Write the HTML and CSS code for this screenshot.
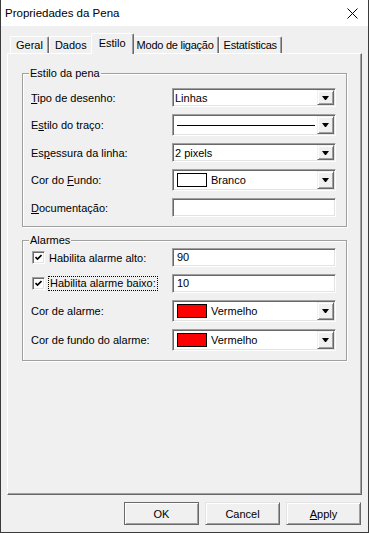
FILE: index.html
```html
<!DOCTYPE html>
<html lang="pt">
<head>
    <meta charset="UTF-8">
    <meta name="viewport" content="width=device-width, initial-scale=1.0">
    <title>Propriedades da Pena</title>
    <link rel="stylesheet" href="styles.css">
</head>
<body>

<div class="window">
    <!-- Barra de título -->
    <div class="titlebar">
        <span class="title">Propriedades da Pena</span>
        <svg class="close" width="11" height="11" viewBox="0 0 11 11">
            <path d="M0.5 0.5 L10.5 10.5 M10.5 0.5 L0.5 10.5" stroke="#000" stroke-width="1" fill="none"/>
        </svg>
    </div>

    <div class="client">
        <!-- Abas -->
        <div class="tabs">
            <div class="tab">Geral</div>
            <div class="tab">Dados</div>
            <div class="tab selected">Estilo</div>
            <div class="tab narrow">Modo de ligação</div>
            <div class="tab narrow">Estatísticas</div>
        </div>

        <div class="panel">
            <fieldset class="group">
                <legend>Estilo da pena</legend>
                <div class="rows pen-rows">
                    <label><u>T</u>ipo de desenho:</label>
                    <div class="combo">
                        <span class="value">Linhas</span>
                        <span class="drop"></span>
                    </div>

                    <label>E<u>s</u>tilo do traço:</label>
                    <div class="combo tall">
                        <span class="value"><span class="line"></span></span>
                        <span class="drop"></span>
                    </div>

                    <label>Es<u>p</u>essura da linha:</label>
                    <div class="combo">
                        <span class="value">2 pixels</span>
                        <span class="drop"></span>
                    </div>

                    <label>Cor do <u>F</u>undo:</label>
                    <div class="combo tall">
                        <span class="value"><span class="swatch white"></span>Branco</span>
                        <span class="drop"></span>
                    </div>

                    <label><u>D</u>ocumentação:</label>
                    <div class="field"></div>
                </div>
            </fieldset>

            <fieldset class="group alarms">
                <legend>Alarmes</legend>
                <div class="rows alarm-rows">
                    <label class="check-label"><span class="check"><svg width="7" height="7" viewBox="0 0 7 7"><path d="M0.5 3 L2.5 5 L6.5 1" stroke="#000" stroke-width="1.6" fill="none"/></svg></span>Habilita alarme alto:</label>
                    <div class="field">90</div>

                    <label class="check-label"><span class="check"><svg width="7" height="7" viewBox="0 0 7 7"><path d="M0.5 3 L2.5 5 L6.5 1" stroke="#000" stroke-width="1.6" fill="none"/></svg></span><span class="focus">Habilita alarme baixo:</span></label>
                    <div class="field">10</div>

                    <label>Cor de alarme:</label>
                    <div class="combo tall">
                        <span class="value"><span class="swatch red"></span>Vermelho</span>
                        <span class="drop"></span>
                    </div>

                    <label>Cor de fundo do alarme:</label>
                    <div class="combo tall">
                        <span class="value"><span class="swatch red"></span>Vermelho</span>
                        <span class="drop"></span>
                    </div>
                </div>
            </fieldset>
        </div>

        <!-- Botões do diálogo -->
        <div class="buttons">
            <button class="btn default">OK</button>
            <button class="btn">Cancel</button>
            <button class="btn"><u>A</u>pply</button>
        </div>
    </div>
</div>

</body>
</html>
```

FILE: styles.css
```css
/* Diálogo no estilo clássico do Windows */
* {
    box-sizing: border-box;
}

body {
    margin: 0;
    font-family: "Liberation Sans", Arial, sans-serif;
    font-size: 11px;
    color: #000;
    background-color: #f0f0f0;
}

.window {
    width: 369px;
    height: 533px;
    border: 1px solid #3b3b3b;
    border-top: none;
    background-color: #f0f0f0;
    display: flex;
    flex-direction: column;
}

.titlebar {
    height: 26px;
    background-color: #fff;
    display: flex;
    align-items: center;
    justify-content: space-between;
    padding: 0 10px 0 4px;
}

.title {
    font-size: 11.5px;
}

.close {
    display: block;
}

.client {
    flex: 1;
    padding: 7px 6px 7px 6px;
    display: flex;
    flex-direction: column;
}

/* Abas */
.tabs {
    display: flex;
    align-items: flex-end;
    height: 21px;
    padding-left: 3px;
    margin-bottom: -1px;
    position: relative;
    z-index: 1;
}

.tab {
    height: 17px;
    margin-bottom: 1px;
    padding: 1px 5px 0;
    line-height: 14px;
    white-space: nowrap;
    background-color: #f0f0f0;
    border: 1px solid;
    border-color: #fff #696969 transparent #fff;
    border-bottom: none;
    border-radius: 2px 2px 0 0;
    box-shadow: inset -1px 0 0 #a0a0a0;
}

.tab.narrow {
    padding: 1px 4px 0;
    letter-spacing: -0.25px;
}

.tab.selected {
    height: 21px;
    margin: 0 -2px;
    padding: 2px 7px 0;
    position: relative;
    z-index: 2;
}

.panel {
    flex: 1;
    border: 1px solid;
    border-color: #fff #696969 #696969 #fff;
    box-shadow: inset -1px -1px 0 #a0a0a0;
    padding: 13px 0 0 14px;
}

/* Caixas de grupo */
.group {
    width: 325px;
    margin: 0;
    padding: 4px 10px 4px 8px;
    border: 1px solid #a0a0a0;
    box-shadow: 1px 1px 0 #fff, inset 1px 1px 0 #fff;
}

.group legend {
    padding: 0 1px;
    margin-left: -2px;
    line-height: 13px;
    background-color: #f0f0f0;
}

.alarms {
    margin-top: 7px;
    padding-top: 0;
    padding-bottom: 3px;
}

.rows {
    display: grid;
    grid-template-columns: 141px 164px;
    align-items: center;
}

.pen-rows {
    grid-auto-rows: 27.5px;
}

.alarm-rows {
    grid-template-rows: 22px 29px 26px 33px;
}

label {
    white-space: nowrap;
}

u {
    text-underline-offset: 1px;
}

/* Campos e listas suspensas */
.combo,
.field {
    height: 19px;
    background-color: #fff;
    border: 1px solid;
    border-color: #a0a0a0 #fff #fff #a0a0a0;
    box-shadow: inset 1px 1px 0 #696969, inset -1px -1px 0 #e3e3e3;
}

.combo {
    display: flex;
    padding: 1px;
}

.combo.tall {
    height: 22px;
}

.field {
    padding: 2px 0 0 4px;
    line-height: 13px;
}

.value {
    flex: 1;
    display: flex;
    align-items: center;
    padding-left: 1px;
}

.line {
    flex: 1;
    height: 1px;
    margin: 0 2px 0 2px;
    background-color: #000;
}

.swatch {
    width: 30px;
    height: 14px;
    margin: 0 4px 0 2px;
    border: 1px solid #000;
}

.swatch.white {
    background-color: #fff;
}

.swatch.red {
    background-color: #ff0000;
}

.drop {
    width: 17px;
    background-color: #f0f0f0;
    border: 1px solid;
    border-color: #f0f0f0 #696969 #696969 #f0f0f0;
    box-shadow: inset 1px 1px 0 #fff, inset -1px -1px 0 #a0a0a0;
    display: flex;
    align-items: center;
    justify-content: center;
}

.drop::after {
    content: "";
    width: 1px;
    border-left: 3px solid transparent;
    border-right: 3px solid transparent;
    border-top: 4px solid #000;
}

/* Caixas de seleção */
.check-label {
    display: flex;
    align-items: center;
    gap: 4px;
}

.check {
    width: 13px;
    height: 13px;
    margin-left: 1px;
    background-color: #fff;
    border: 1px solid;
    border-color: #a0a0a0 #fff #fff #a0a0a0;
    box-shadow: inset 1px 1px 0 #696969, inset -1px -1px 0 #e3e3e3;
    display: flex;
    align-items: center;
    justify-content: center;
}

.check svg {
    display: block;
}

.focus {
    border: 1px dotted #000;
    padding: 0 1px;
    margin-left: -1px;
    line-height: 13px;
}

/* Botões */
.buttons {
    display: flex;
    justify-content: flex-end;
    gap: 6px;
    margin-top: 7px;
    padding-right: 1px;
}

.btn {
    width: 75px;
    height: 23px;
    padding: 0;
    font: inherit;
    color: #000;
    background-color: #f0f0f0;
    border: 1px solid;
    border-color: #e3e3e3 #696969 #696969 #e3e3e3;
    box-shadow: inset 1px 1px 0 #fff, inset -1px -1px 0 #a0a0a0;
}

.btn.default {
    border-color: #696969;
}
```
